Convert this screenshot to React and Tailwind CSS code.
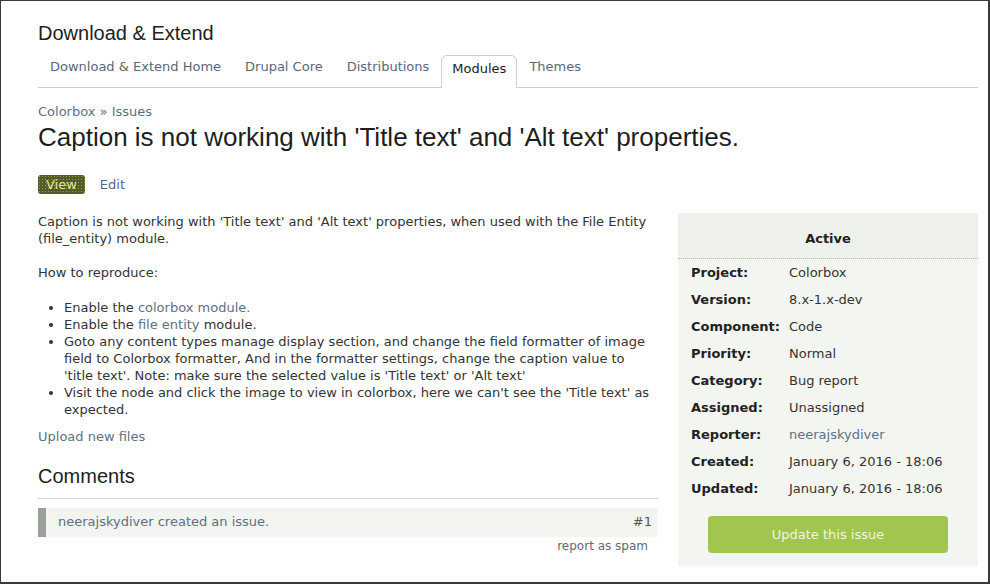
import React from 'react';

const tabs = ['Download & Extend Home', 'Drupal Core', 'Distributions', 'Modules', 'Themes'];

const details = [
  ['Project:', 'Colorbox'],
  ['Version:', '8.x-1.x-dev'],
  ['Component:', 'Code'],
  ['Priority:', 'Normal'],
  ['Category:', 'Bug report'],
  ['Assigned:', 'Unassigned'],
  ['Reporter:', 'neerajskydiver', true],
  ['Created:', 'January 6, 2016 - 18:06'],
  ['Updated:', 'January 6, 2016 - 18:06'],
];

const Link = ({ children }) => <a className="text-[#5d7185] no-underline">{children}</a>;

const App = () => {
  return (
    <div className="w-[990px] h-[585px] bg-white overflow-hidden">
      <div className="w-[990px] h-[584px] border-l border-t border-r-2 border-b-2 border-[#3a3a3a] pl-[37px] pr-[10px] pt-[20px] font-['DejaVu_Sans',sans-serif] text-[13px] leading-[17px] text-[#333]">
        {/* section title */}
        <h2 className="font-['Liberation_Sans',Arial,sans-serif] text-[20px] leading-[24px] text-[#222]">Download & Extend</h2>

        {/* tabs */}
        <div className="mt-[10px] flex border-b border-[#d0d0d0]">
          {tabs.map((t) => (
            <div
              key={t}
              className={
                t === 'Modules'
                  ? 'px-[10px] pt-[4px] border border-b-0 border-[#d0d0d0] rounded-t-[6px] bg-white text-[#222] -mb-px pb-[11px]'
                  : 'px-[12px] pt-[3px] pb-[11px] text-[#57687a]'
              }
            >
              {t}
            </div>
          ))}
        </div>

        {/* breadcrumb + title */}
        <div className="mt-[15px] text-[#5d7185]">Colorbox » Issues</div>
        <h1 className="mt-[1px] font-['Liberation_Sans',Arial,sans-serif] text-[26px] leading-[32px] text-[#1e1e1e]">
          Caption is not working with 'Title text' and 'Alt text' properties.
        </h1>

        <div className="mt-[22px] flex items-center gap-[15px]">
          <span className="px-[8px] py-px rounded-[3px] bg-[#55592e] bg-[radial-gradient(#8f9e3a_0.7px,transparent_0.8px)] bg-[length:3px_3px] text-[#dfe98f]">View</span>
          <span className="text-[#57687a]">Edit</span>
        </div>

        <div className="mt-[19px] flex gap-[20px]">
          {/* main column */}
          <div className="w-[620px]">
            <p>
              Caption is not working with 'Title text' and 'Alt text' properties, when used with the File Entity (file_entity) module.
            </p>
            <p className="mt-[17px]">How to reproduce:</p>
            <ul className="mt-[18px] pl-[26px] pr-[8px] list-disc marker:text-[#333]">
              <li>Enable the <Link>colorbox module.</Link></li>
              <li>Enable the <Link>file entity</Link> module.</li>
              <li>
                Goto any content types manage display section, and change the field formatter of image field to Colorbox formatter, And in the formatter settings, change the caption value to 'title text'. Note: make sure the selected value is 'Title text' or 'Alt text'
              </li>
              <li>Visit the node and click the image to view in colorbox, here we can't see the 'Title text' as expected.</li>
            </ul>
            <div className="mt-[10px]"><Link>Upload new files</Link></div>

            <h2 className="mt-[19px] pb-[10px] border-b border-[#cfd6d9] font-['Liberation_Sans',Arial,sans-serif] text-[20px] leading-[24px] text-[#222]">
              Comments
            </h2>
            <div className="mt-[9px] flex bg-[#f2f4ef]">
              <div className="w-[8px] bg-[#9aa19a] bg-[radial-gradient(#c4c9c2_0.6px,transparent_0.7px)] bg-[length:2px_2px]" />
              <div className="flex-1 flex justify-between pl-[12px] pr-[6px] pt-[5px] pb-[7px]">
                <span className="text-[#5d7185]">neerajskydiver created an issue.</span>
                <span className="text-[#555]">#1</span>
              </div>
            </div>
            <div className="text-right pr-[10px] pt-px text-[12px] text-[#5f6a72]">report as spam</div>
          </div>

          {/* sidebar */}
          <div className="w-[300px] bg-[#f3f5f0] pb-[13px]">
            <div className="pt-[17px] pb-[11px] text-center font-bold text-[#222] bg-[#eef0eb] border-b border-dotted border-[#b3b8b1]">Active</div>
            <div className="grid grid-cols-[98px_1fr] pl-[13px]">
              {details.map(([k, v, link]) => (
                <React.Fragment key={k}>
                  <div className="py-[5px] font-bold text-[#222]">{k}</div>
                  <div className={'py-[5px] ' + (link ? 'text-[#5d7185]' : 'text-[#333]')}>{v}</div>
                </React.Fragment>
              ))}
            </div>
            <div className="mt-[14px] flex justify-center">
              <button className="w-[240px] h-[37px] rounded-[4px] bg-[#a1c64f] text-[#eef6dc] text-[13px]">Update this issue</button>
            </div>
          </div>
        </div>
      </div>
    </div>
  );
};

export default App;
